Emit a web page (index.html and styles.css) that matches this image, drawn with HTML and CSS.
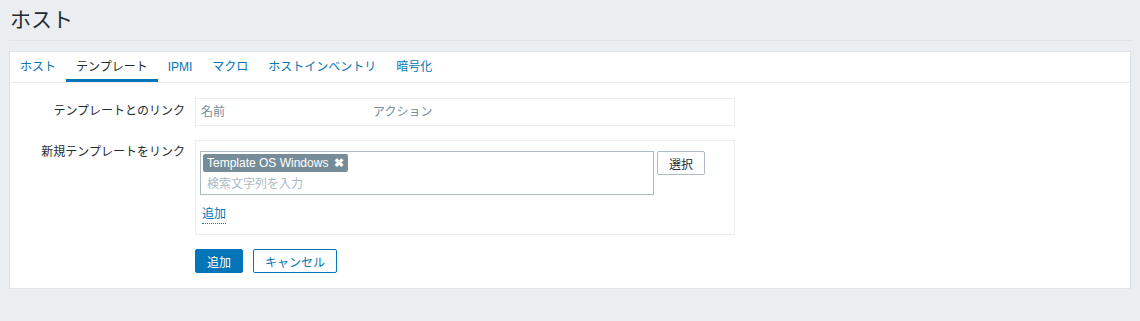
FILE: index.html
```html
<!DOCTYPE html>
<html lang="ja">
<head>
  <meta charset="UTF-8" />
  <title>ホスト</title>
  <link rel="stylesheet" href="styles.css">
</head>
<body>

  <!-- Header -->
  <header class="header">
    <h1>ホスト</h1>
  </header>

  <!-- Panel -->
  <div class="panel">
    <ul class="tabs">
      <li><a>ホスト</a></li>
      <li class="active"><a>テンプレート</a></li>
      <li><a>IPMI</a></li>
      <li><a>マクロ</a></li>
      <li><a>ホストインベントリ</a></li>
      <li><a>暗号化</a></li>
    </ul>

    <div class="form">
      <div class="row">
        <label>テンプレートとのリンク</label>
        <div class="linked">
          <span class="col-name">名前</span>
          <span>アクション</span>
        </div>
      </div>

      <div class="row">
        <label class="label-top">新規テンプレートをリンク</label>
        <div class="box">
          <div class="ms-line">
            <div class="multiselect">
              <span class="tag">Template OS Windows <b class="tag-x">✖</b></span>
              <span class="placeholder">検索文字列を入力</span>
            </div>
            <button class="btn-grey">選択</button>
          </div>
          <a class="link-dotted">追加</a>
        </div>
      </div>

      <div class="row">
        <label></label>
        <div class="buttons">
          <button class="btn-main">追加</button>
          <button class="btn-alt">キャンセル</button>
        </div>
      </div>
    </div>
  </div>

</body>
</html>
```

FILE: styles.css
```css
* {
  box-sizing: border-box;
  margin: 0;
  padding: 0;
}

body {
  background: #ebeef0;
  color: #1f2c33;
  font-family: "Liberation Sans", Arial, "Noto Sans CJK JP", sans-serif;
  font-size: 12px;
  line-height: 14px;
}

.header {
  margin: 0 9px;
  padding: 8px 1px 0;
  height: 41px;
  border-bottom: 1px solid #dde2e5;
}

.header h1 {
  font-size: 21px;
  font-weight: normal;
  line-height: 24px;
  color: #1f2c33;
}

.panel {
  margin: 10px 9px 0;
  background: #fff;
  border: 1px solid #dfe4e7;
  height: 238px;
}

.tabs {
  list-style: none;
  display: flex;
  height: 31px;
  border-bottom: 1px solid #ebeef0;
  padding-left: 0;
}

.tabs li a {
  display: block;
  padding: 8px 10px 0;
  height: 30px;
  color: #0275b8;
  line-height: 14px;
}

.tabs li.active a {
  color: #1f2c33;
  border-bottom: 3px solid #0275b8;
}

.form {
  padding-top: 15px;
}

.row {
  display: flex;
  margin-bottom: 14px;
}

.row label {
  width: 175px;
  flex: none;
  text-align: right;
  padding-top: 6px;
  margin-right: 10px;
}

.row .label-top {
  padding-top: 5px;
}

.linked {
  width: 540px;
  height: 28px;
  border: 1px solid #ebeef0;
  padding: 6px 5px;
  color: #768d99;
  display: flex;
}

.col-name {
  width: 172px;
}

.box {
  width: 540px;
  height: 95px;
  border: 1px solid #ebeef0;
  padding: 10px 4px 0;
}

.ms-line {
  display: flex;
  gap: 3px;
  align-items: flex-start;
}

.multiselect {
  width: 454px;
  height: 44px;
  border: 1px solid #acbbc2;
  padding: 2px 2px 0;
  display: flex;
  flex-direction: column;
  align-items: flex-start;
}

.tag {
  display: inline-block;
  background: #768d99;
  color: #fff;
  height: 18px;
  line-height: 18px;
  padding: 0 4px 0 4px;
  border-radius: 2px;
}

.tag-x {
  font-size: 12px;
  margin-left: 2px;
  font-weight: bold;
}

.placeholder {
  color: #acbbc2;
  padding: 5px 0 0 4px;
}

button {
  font-family: inherit;
  font-size: 12px;
  height: 24px;
  border-radius: 2px;
  cursor: pointer;
}

.btn-grey {
  width: 48px;
  background: #fff;
  color: #1f2c33;
  border: 1px solid #acbbc2;
}

.link-dotted {
  display: inline-block;
  margin: 12px 0 0 2px;
  color: #0275b8;
  border-bottom: 1px dotted #0275b8;
  line-height: 14px;
  padding-bottom: 2px;
}

.buttons {
  display: flex;
  gap: 10px;
}

.btn-main {
  width: 48px;
  background: #0275b8;
  color: #fff;
  border: 1px solid #0275b8;
}

.btn-alt {
  width: 84px;
  background: #fff;
  color: #0275b8;
  border: 1px solid #0275b8;
}
```
